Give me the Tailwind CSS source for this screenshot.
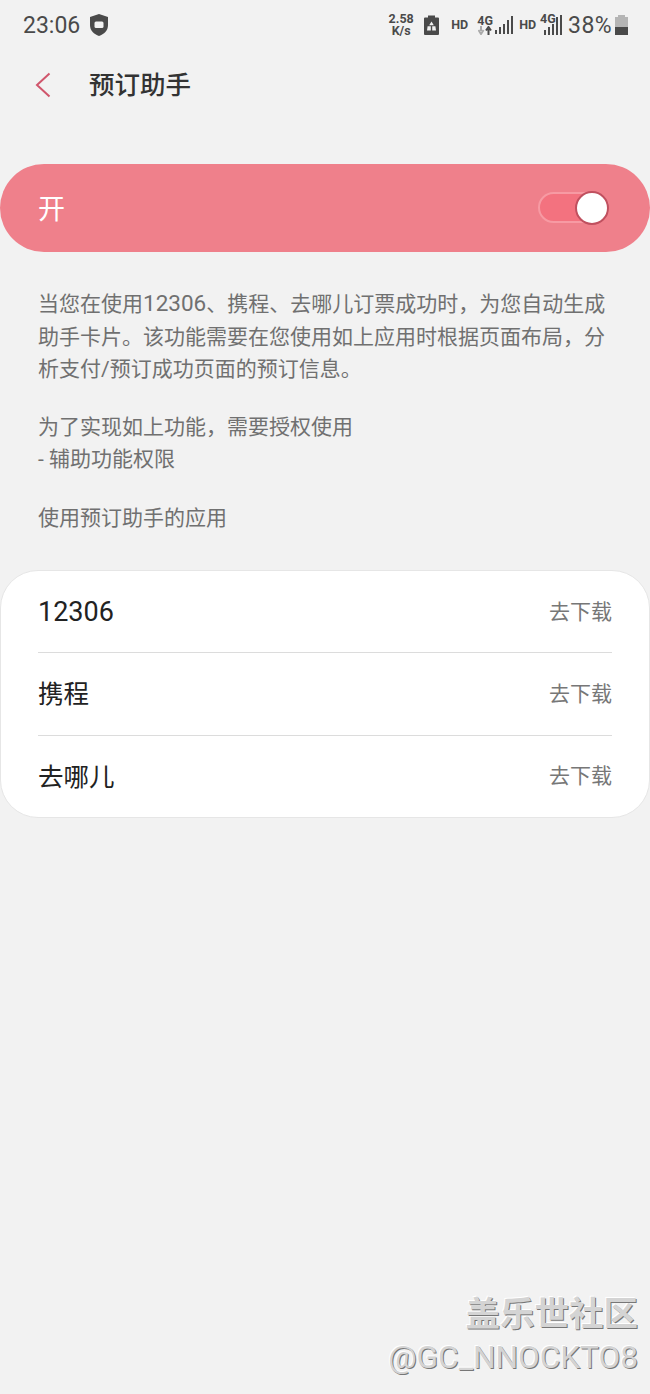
<!DOCTYPE html>
<html lang="zh">
<head>
    <meta charset="UTF-8">
    <meta name="viewport" content="width=device-width, initial-scale=1.0">
    <title>预订助手</title>
    <script src="https://cdn.jsdelivr.net/npm/@tailwindcss/browser@4"></script>
</head>
<body class="bg-[#f2f2f2] font-['Roboto','Noto_Sans_CJK_SC',sans-serif] w-[650px] h-[1394px] overflow-hidden relative">

    <!-- status bar -->
    <div class="h-[50px] pl-[23px] pr-[22px] flex items-center justify-between text-[#4a4a4a]">
        <div class="flex items-center gap-[9px]">
            <span class="text-[23px] leading-none">23:06</span>
            <svg width="20" height="24" viewBox="0 0 20 24">
                <path d="M10 1 L19 4 V12 C19 18 15 21 10 23 C5 21 1 18 1 12 V4 Z" fill="#4a4a4a"/>
                <rect x="5.5" y="8.5" width="9" height="6.5" rx="1.5" fill="#f2f2f2"/>
            </svg>
        </div>
        <div class="flex items-center">
            <div class="text-[12.5px] font-bold leading-[12px] text-center w-[26px]">2.58<br>K/s</div>
            <svg class="ml-[10px]" width="15" height="20" viewBox="0 0 15 20">
                <path d="M4 0.5 H11 V2.5 H14 A1 1 0 0 1 15 3.5 V19 A1 1 0 0 1 14 20 H1 A1 1 0 0 1 0 19 V3.5 A1 1 0 0 1 1 2.5 H4 Z" fill="#4a4a4a"/>
                <path d="M7.5 6.5 L9.8 10.2 H5.2 Z M3.6 11.2 H6.8 V15.5 H3 Z M8.2 11.2 H11.4 L12 15.5 H8.2 Z" fill="#f2f2f2"/>
            </svg>
            <span class="ml-[12px] text-[12.5px] font-bold leading-none">HD</span>
            <div class="ml-[9px] w-[16px] flex flex-col items-center">
                <span class="text-[12.5px] font-bold leading-[11px]">4G</span>
                <svg width="14" height="9" viewBox="0 0 14 9">
                    <path d="M3 0 V5 M0.5 4 L3 8 L5.5 4" stroke="#aaa" stroke-width="2" fill="none"/>
                    <path d="M10.5 9 V3 M8 4.5 L10.5 1 L13 4.5" stroke="#4a4a4a" stroke-width="2" fill="none"/>
                </svg>
            </div>
            <svg class="ml-[2px]" width="18" height="18" viewBox="0 0 18 18" fill="#4a4a4a">
                <rect x="0" y="14" width="2" height="4"/><rect x="4" y="11" width="2" height="7"/><rect x="8" y="8" width="2" height="10"/><rect x="12" y="4" width="2" height="14"/><rect x="16" y="0" width="2" height="18"/>
            </svg>
            <span class="ml-[6px] text-[12.5px] font-bold leading-none">HD</span>
            <div class="relative ml-[4px] w-[22px] h-[20px]">
                <span class="absolute left-0 -top-[2px] text-[12.5px] font-bold leading-[11px]">4G</span>
                <svg class="absolute left-[4px] top-0" width="18" height="20" viewBox="0 0 18 20" fill="#4a4a4a">
                    <rect x="0" y="15" width="2" height="5"/><rect x="4" y="12" width="2" height="8"/><rect x="8" y="9" width="2" height="11"/><rect x="12" y="2" width="2" height="18"/><rect x="16" y="0" width="2" height="20"/>
                </svg>
            </div>
            <span class="ml-[6px] text-[23px] leading-none tracking-[0.4px]">38%</span>
            <div class="ml-[3px] w-[13px] h-[20px] flex flex-col items-center">
                <div class="w-[7px] h-[2px] bg-[#b5b5b5]"></div>
                <div class="w-[13px] h-[10px] bg-[#b5b5b5]"></div>
                <div class="w-[13px] h-[8px] bg-[#4a4a4a]"></div>
            </div>
        </div>
    </div>

    <!-- header -->
    <div class="h-[70px] flex items-center pl-[35px]">
        <svg width="16" height="26" viewBox="0 0 16 26" fill="none">
            <path d="M14.5 1.5 L2 13 L14.5 24.5" stroke="#d0566c" stroke-width="2"/>
        </svg>
        <span class="ml-[38px] mt-[1px] text-[25.5px] font-medium text-[#333] leading-none">预订助手</span>
    </div>

    <!-- master switch -->
    <div class="mt-[44px] h-[88px] rounded-[44px] bg-[#ef808b] flex items-center justify-between pl-[38px] pr-[41px]">
        <span class="text-[27px] text-white leading-none mt-[5px]">开</span>
        <div class="relative w-[71px] h-[34px]">
            <div class="w-full h-[31px] mt-[1px] rounded-full bg-[#f3727f] border-2 border-[#f79aa3]"></div>
            <div class="absolute right-0 top-0 w-[34px] h-[34px] rounded-full bg-white border-2 border-[#c0505f]"></div>
        </div>
    </div>

    <!-- description -->
    <div class="mt-[35px] px-[38px] text-[21px] leading-[32.5px] text-[#707070]">
        <p>当您在使用<span class="text-[22.5px]">12306</span>、携程、去哪儿订票成功时，为您自动生成助手卡片。该功能需要在您使用如上应用时根据页面布局，分析支付/预订成功页面的预订信息。</p>
        <p class="mt-[25px]">为了实现如上功能，需要授权使用</p>
        <p>- 辅助功能权限</p>
        <p class="mt-[26px]">使用预订助手的应用</p>
    </div>

    <!-- app list -->
    <div class="mt-[36px] bg-white rounded-[38px] border border-[#e6e6e6] px-[37px]">
        <div class="h-[82px] flex items-center justify-between border-b border-[#dcdcdc]">
            <span class="text-[27px] text-[#222] leading-none mt-[2px]">12306</span>
            <span class="text-[21px] text-[#777] leading-none mt-[2px]">去下载</span>
        </div>
        <div class="h-[83px] flex items-center justify-between border-b border-[#dcdcdc]">
            <span class="text-[25.5px] text-[#222] leading-none mt-[2px]">携程</span>
            <span class="text-[21px] text-[#777] leading-none">去下载</span>
        </div>
        <div class="h-[81px] flex items-center justify-between">
            <span class="text-[25.5px] text-[#222] leading-none mt-[2px]">去哪儿</span>
            <span class="text-[21px] text-[#777] leading-none">去下载</span>
        </div>
    </div>

    <!-- watermark -->
    <div class="absolute right-[12px] bottom-[17px] flex flex-col items-end text-[#d4d4d4] [text-shadow:1px_1px_0_#777,-1px_-1px_0_#fff]">
        <span class="text-[34.5px] font-bold leading-[50px]">盖乐世社区</span>
        <span class="text-[31.6px] leading-[38px]">@GC_NNOCKTO8</span>
    </div>
</body>
</html>
